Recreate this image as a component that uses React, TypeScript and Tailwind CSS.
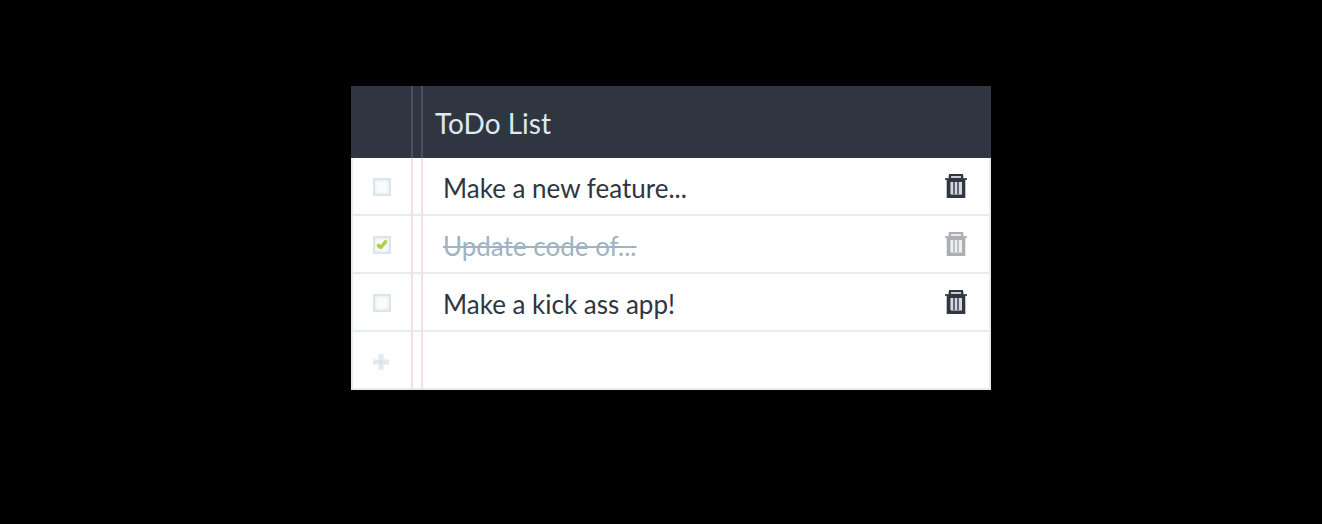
import { useState } from "react";

type Task = { id: number; text: string; done: boolean };

const initialTasks: Task[] = [
  { id: 1, text: "Make a new feature...", done: false },
  { id: 2, text: "Update code of...", done: true },
  { id: 3, text: "Make a kick ass app!", done: false },
];

function TrashIcon() {
  return (
    <svg width="22" height="24" viewBox="0 0 22 24" aria-hidden="true">
      <path d="M1 6H21V24H1ZM3 1H19V4H3Z" fill="#303642" fillOpacity="0.3" />
      <path d="M0 4H22V6H0Z" fill="#303642" fillOpacity="0.85" />
      <path d="M4 0H18V5H4Z" fill="#303642" />
      <path d="M6 2H16V4H6Z" fill="#c9ccd1" />
      <path d="M2 5H20V24H2Z" fill="#303642" />
      <path d="M6 8H17V20H6Z" fill="#d6d8dd" />
      <path d="M5 8H6V20H5ZM6 20H17V21H6Z" fill="#8b909a" />
      <path d="M8 8H10V20H8ZM12 8H14V20H12Z" fill="#606673" />
    </svg>
  );
}

function CheckIcon() {
  return (
    <svg
      className="pointer-events-none col-start-1 row-start-1"
      width="18"
      height="18"
      viewBox="0 0 18 18"
      aria-hidden="true"
    >
      <path
        d="M4 8.5L6 7.5L7.7 9L12 4L14 4.6V6.8L8.6 13H7L4 10.8Z"
        fill="#b5cb52"
        stroke="#b5cb52"
        strokeOpacity="0.35"
      />
    </svg>
  );
}

function PlusIcon() {
  return (
    <svg width="16" height="16" viewBox="0 0 16 16" aria-hidden="true">
      <path d="M5 0H11V16H5ZM0 5H16V11H0Z" fill="#edf3f6" />
      <path d="M6 0H10V16H6ZM0 6H16V10H0Z" fill="#e0ebf0" />
      <path d="M6 6H10V10H6Z" fill="#d7e6ea" />
    </svg>
  );
}

function MarginLines() {
  return <span className="w-3 shrink-0 self-stretch border-x-2 border-[#f2e2dc]" />;
}

export default function App() {
  const [tasks, setTasks] = useState(initialTasks);
  const [draft, setDraft] = useState("");

  const toggle = (id: number) =>
    setTasks(tasks.map((t) => (t.id === id ? { ...t, done: !t.done } : t)));
  const remove = (id: number) => setTasks(tasks.filter((t) => t.id !== id));
  const add = () => {
    if (!draft.trim()) return;
    setTasks([...tasks, { id: Date.now(), text: draft.trim(), done: false }]);
    setDraft("");
  };

  return (
    <main className="min-h-screen bg-black pt-[86px] pl-5 font-['Lato',sans-serif]">
      <section className="mx-auto w-full max-w-[640px]">
        <header className="flex h-[72px] items-center bg-[#2f3641]">
          <span className="w-[60px] shrink-0" />
          <span className="w-3 shrink-0 self-stretch border-x-2 border-[#485260]" />
          <h1 className="pt-0.5 pl-3 text-[28px] leading-9 text-[#dde8ef]">ToDo List</h1>
        </header>
        <ul className="border-x-2 border-[#e6ebee] bg-white">
          {tasks.map((task) => (
            <li key={task.id} className="flex h-[58px] items-center bg-[linear-gradient(#e6ebee,#e6ebee)] bg-[length:100%_2px] bg-bottom bg-no-repeat">
              <span className="grid w-[58px] shrink-0 place-content-center">
                <input
                  id={`task-${task.id}`}
                  type="checkbox"
                  checked={task.done}
                  onChange={() => toggle(task.id)}
                  className="col-start-1 row-start-1 size-[18px] appearance-none border-2 border-[#dae5ec] bg-[#fcfcfc] shadow-[inset_0_0_3px_1px_#e6eef3]"
                />
                {task.done && <CheckIcon />}
              </span>
              <MarginLines />
              <label
                htmlFor={`task-${task.id}`}
                className={`min-w-0 flex-1 truncate pt-0.5 pl-5 text-[26px] leading-9 ${
                  task.done ? "text-[#9fb3c2] line-through decoration-2" : "text-[#2f3641]"
                }`}
              >
                {task.text}
              </label>
              <button
                type="button"
                aria-label={`Delete ${task.text}`}
                onClick={() => remove(task.id)}
                className={`mr-[22px] mb-0.5 shrink-0 ${task.done ? "opacity-40" : ""}`}
              >
                <TrashIcon />
              </button>
            </li>
          ))}
          <li className="flex h-[58px] items-center bg-[linear-gradient(#e6ebee,#e6ebee)] bg-[length:100%_2px] bg-bottom bg-no-repeat">
            <button
              type="button"
              aria-label="Add task"
              onClick={add}
              className="grid w-[58px] shrink-0 place-content-center pt-0.5 pr-0.5"
            >
              <PlusIcon />
            </button>
            <MarginLines />
            <input
              type="text"
              aria-label="New task"
              value={draft}
              onChange={(e) => setDraft(e.target.value)}
              onKeyDown={(e) => e.key === "Enter" && add()}
              className="h-12 min-w-0 flex-1 px-5 text-[26px] text-[#2f3641] outline-none"
            />
          </li>
        </ul>
      </section>
    </main>
  );
}
